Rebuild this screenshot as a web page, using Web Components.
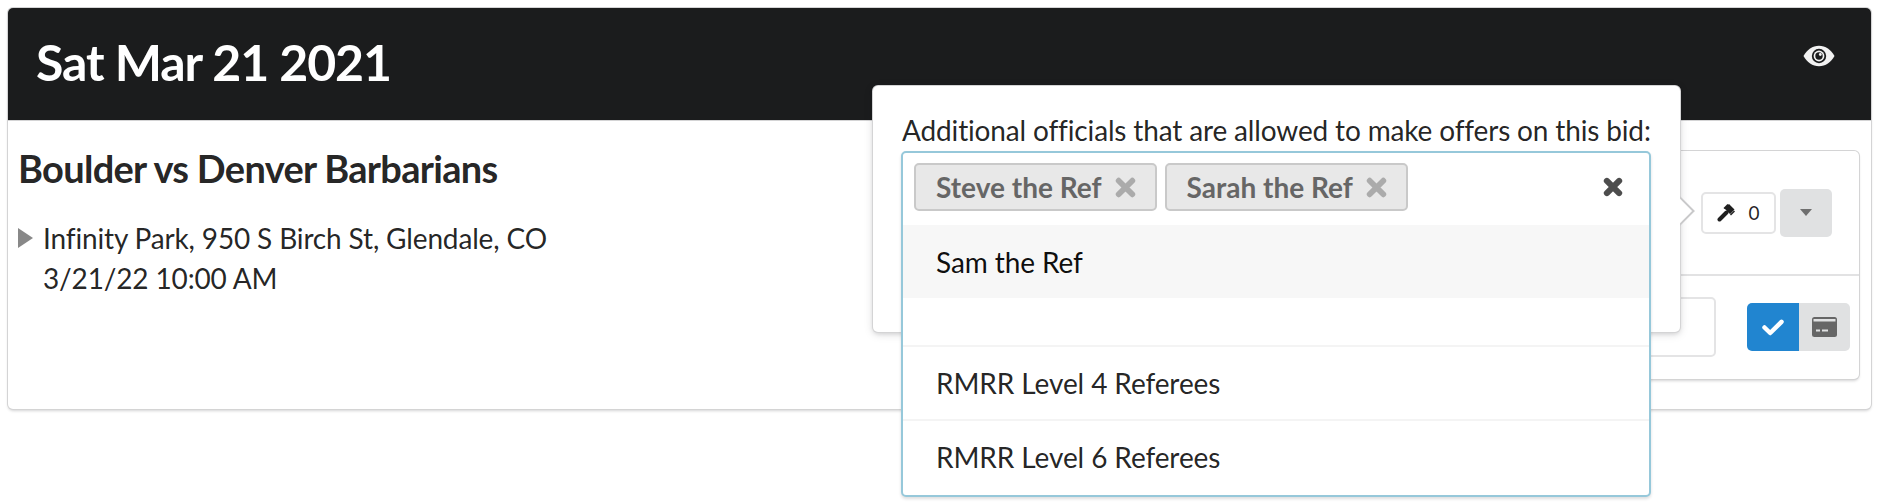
<!DOCTYPE html>
<html>
<head>
<meta charset="utf-8">
<style>
  html, body { margin: 0; background: #fff; min-height: 100vh; }
  body { font-family: Lato, "Liberation Sans", sans-serif; color: rgba(0,0,0,.87); display: flow-root; }
</style>
</head>
<body>
<game-card date="Sat Mar 21 2021">
  <game-info slot="info" title-text="Boulder vs Denver Barbarians">
    <span>Infinity Park, 950 S Birch St, Glendale, CO</span>
    <span>3/21/22 10:00 AM</span>
  </game-info>
  <bid-panel slot="panel"></bid-panel>
  <officials-popup slot="popup">
    <tag-chip slot="tags">Steve the Ref</tag-chip>
    <tag-chip slot="tags">Sarah the Ref</tag-chip>
    <menu-row slot="rows" selected>Sam the Ref</menu-row>
    <menu-row slot="rows" empty></menu-row>
    <menu-row slot="rows">RMRR Level 4 Referees</menu-row>
    <menu-row slot="rows">RMRR Level 6 Referees</menu-row>
  </officials-popup>
</game-card>

<script>
class GameCard extends HTMLElement {
  constructor() {
    super();
    this.attachShadow({ mode: "open" });
  }

  connectedCallback() {
    this.shadowRoot.innerHTML = `
      <style>
        :host {
          display: block;
          position: relative;
          margin: 8px 9px 0 8px;
          height: 401px;
          background: #fff;
          border-radius: 5px;
          box-shadow: 0 2px 3px 0 #d4d4d5, 0 0 0 1px #d4d4d5;
        }
        header {
          display: flex;
          align-items: center;
          justify-content: space-between;
          height: 112px;
          padding: 0 36px 0 28px;
          box-sizing: border-box;
          background: #1b1c1d;
          color: #fff;
          border-radius: 5px 5px 0 0;
          box-shadow: 0 1px 0 #d4d4d5;
        }
        h1 { margin: 0 0 5px; font-size: 50px; font-weight: 700; line-height: 1.2; letter-spacing: -1.05px; }
        svg { display: block; margin-bottom: 16px; }
        main {
          display: flex;
          justify-content: space-between;
          align-items: flex-start;
          padding: 31px 12px 0 10px;
        }
      </style>
      <header>
        <h1>${this.getAttribute("date")}</h1>
        <svg width="32" height="22" viewBox="0 0 32 22">
          <path fill="#f2f2f2" d="M0.5 11C4 4.6 9.5 0.8 16 0.8S28 4.6 31.5 11C28 17.4 22.500 21.200 16 21.200S4 17.400 0.500 11Z"/>
          <circle cx="16" cy="11" r="7.200" fill="#1b1c1d"/>
          <circle cx="16" cy="11" r="5.400" fill="#f2f2f2"/>
          <circle cx="16" cy="11" r="3.700" fill="#1b1c1d"/>
          <circle cx="17.300" cy="9.500" r="1.400" fill="#f2f2f2"/>
        </svg>
      </header>
      <main>
        <slot name="info"></slot>
        <slot name="panel"></slot>
      </main>
      <slot name="popup"></slot>
    `;
  }
}

class GameInfo extends HTMLElement {
  constructor() {
    super();
    this.attachShadow({ mode: "open" });
  }

  connectedCallback() {
    this.shadowRoot.innerHTML = `
      <style>
        :host { display: block; margin-top: -3px; }
        h2 { margin: 0 0 30px; font-size: 38px; font-weight: 700; line-height: 40px; letter-spacing: -.7px; color: rgba(0,0,0,.87); }
        .row { display: flex; align-items: flex-start; gap: 10px; }
        .arrow {
          width: 0; height: 0; margin-top: 10px;
          border-style: solid;
          border-width: 10px 0 10px 15px;
          border-color: transparent transparent transparent #888;
        }
        .lines { font-size: 28px; line-height: 40px; letter-spacing: -.15px; }
        ::slotted(span) { display: block; }
      </style>
      <h2>${this.getAttribute("title-text")}</h2>
      <div class="row">
        <span class="arrow"></span>
        <div class="lines"><slot></slot></div>
      </div>
    `;
  }
}

class BidPanel extends HTMLElement {
  constructor() {
    super();
    this.attachShadow({ mode: "open" });
  }

  connectedCallback() {
    this.shadowRoot.innerHTML = `
      <style>
        :host {
          display: block;
          width: 800px;
          height: 228px;
          box-sizing: border-box;
          background: #fff;
          border-radius: 5px;
          box-shadow: 0 2px 3px 0 #d4d4d5, 0 0 0 1px #d4d4d5;
        }
        .top {
          display: flex;
          justify-content: flex-end;
          align-items: center;
          gap: 4px;
          height: 125px;
          padding: 0 27px 0 0;
          box-sizing: border-box;
          border-bottom: 2px solid #e2e2e3;
        }
        .bid {
          display: flex;
          align-items: center;
          justify-content: center;
          gap: 12px;
          width: 75px;
          height: 42px;
          box-sizing: border-box;
          border: 2px solid #e4e4e5;
          border-radius: 5px;
          font-size: 19px;
          font-weight: 400;
        }
        .more {
          display: flex;
          align-items: center;
          justify-content: center;
          width: 52px;
          height: 48px;
          background: #e0e1e2;
          border-radius: 5px;
        }
        .more i {
          width: 0; height: 0;
          border-style: solid;
          border-width: 7px 6.500px 0 6.500px;
          border-color: #6f6f6f transparent transparent transparent;
        }
        .bottom {
          display: flex;
          justify-content: flex-end;
          align-items: center;
          gap: 31px;
          padding: 21px 9px 0 0;
        }
        .field {
          width: 260px;
          height: 60px;
          box-sizing: border-box;
          border: 2px solid #e4e4e5;
          border-radius: 5px;
        }
        .toggle { display: flex; height: 48px; border-radius: 5px; overflow: hidden; }
        .toggle div { display: flex; align-items: center; justify-content: center; width: 52px; }
        .ok { background: #2185d0; }
        .card { background: #e0e1e2; width: 51px !important; }
      </style>
      <div class="top">
        <div class="bid">
          <svg width="19" height="19" viewBox="0 0 19 19">
            <path fill="#1f1f1f" d="M7.500 5.500L12 1L17.500 6.500L13 11ZM6.500 5L10.500 1L11.500 2L7.500 6ZM13 11.500L17 7.500L18 8.500L14 12.500Z"/>
            <path fill="none" stroke="#1f1f1f" stroke-width="4" stroke-linecap="round" d="M9.500 9.500L2.500 16.500"/>
          </svg>
          <span>0</span>
        </div>
        <div class="more"><i></i></div>
      </div>
      <div class="bottom">
        <div class="field"></div>
        <div class="toggle">
          <div class="ok">
            <svg width="22" height="17" viewBox="0 0 22 17">
              <path fill="none" stroke="#fff" stroke-width="4.500" stroke-linecap="round" stroke-linejoin="round" d="M2.500 8.500L8.200 14L19.500 2.800"/>
            </svg>
          </div>
          <div class="card">
            <svg width="25" height="20" viewBox="0 0 25 20">
              <rect width="25" height="20" rx="2.500" fill="#666"/>
              <rect x="1.500" y="2" width="22" height="2.500" fill="#e0e1e2"/>
              <rect x="4" y="12.500" width="4" height="2" fill="#e0e1e2"/>
              <rect x="10" y="12.500" width="6" height="2" fill="#e0e1e2"/>
            </svg>
          </div>
        </div>
      </div>
    `;
  }
}

class OfficialsPopup extends HTMLElement {
  constructor() {
    super();
    this.attachShadow({ mode: "open" });
  }

  connectedCallback() {
    this.shadowRoot.innerHTML = `
      <style>
        :host {
          position: absolute;
          left: 865px;
          top: 78px;
          width: 807px;
          height: 246px;
          box-sizing: border-box;
          padding: 24px 29px 0;
          background: #fff;
          border-radius: 5px;
          box-shadow: 0 0 0 1px #d4d4d5, 0 2px 4px 0 rgba(34,36,38,.12), 0 2px 10px 0 rgba(34,36,38,.15);
        }
        .arrow {
          position: absolute;
          right: -8px;
          top: 115px;
          width: 20px;
          height: 20px;
          background: #fff;
          transform: rotate(45deg);
          box-shadow: 1px -1px 0 1px #c9c9ca;
        }
        .cover {
          position: absolute;
          right: 0;
          top: 100px;
          width: 16px;
          height: 50px;
          background: #fff;
        }
        p { position: relative; margin: 0; font-size: 28px; line-height: 40px; letter-spacing: -.15px; white-space: nowrap; }
        .box {
          position: absolute;
          left: 28px;
          top: 65px;
          width: 750px;
          height: 346px;
          box-sizing: border-box;
          background: #fff;
          border: 2px solid #96c8da;
          border-radius: 5px;
          box-shadow: 0 2px 3px 0 rgba(34,36,38,.15);
        }
        .tags {
          position: relative;
          display: flex;
          gap: 8px;
          height: 72px;
          padding: 10px 0 0 11px;
          box-sizing: border-box;
        }
        .clear { position: absolute; right: 26px; top: 24px; display: block; }
      </style>
      <div class="arrow"></div>
      <div class="cover"></div>
      <p>Additional officials that are allowed to make offers on this bid:</p>
      <div class="box">
        <div class="tags">
          <slot name="tags"></slot>
          <svg class="clear" width="20" height="20" viewBox="0 0 18 18">
            <path fill="none" stroke="#4d4d4d" stroke-width="5.500" stroke-linecap="round" d="M3.500 3.500L14.500 14.500M14.500 3.500L3.500 14.500"/>
          </svg>
        </div>
        <slot name="rows"></slot>
      </div>
    `;
  }
}

class TagChip extends HTMLElement {
  constructor() {
    super();
    this.attachShadow({ mode: "open" });
  }

  connectedCallback() {
    this.shadowRoot.innerHTML = `
      <style>
        :host {
          display: inline-flex;
          align-items: center;
          gap: 13px;
          height: 48px;
          box-sizing: border-box;
          padding: 0 19px 0 20px;
          background: #e8e8e8;
          border: 2px solid #c9c9c9;
          border-radius: 5px;
          color: #666;
          font-size: 28px;
          font-weight: 700;
        }
        svg { display: block; }
      </style>
      <slot></slot>
      <svg width="21" height="21" viewBox="0 0 20 20">
        <path fill="none" stroke="#ababab" stroke-width="5.500" stroke-linecap="round" d="M3.500 3.500L16.500 16.500M16.500 3.500L3.500 16.500"/>
      </svg>
    `;
  }
}

class MenuRow extends HTMLElement {
  constructor() {
    super();
    this.attachShadow({ mode: "open" });
  }

  connectedCallback() {
    this.shadowRoot.innerHTML = `
      <style>
        :host {
          display: flex;
          align-items: center;
          height: 74px;
          box-sizing: border-box;
          padding-left: 33px;
          border-top: 2px solid #f4f4f4;
          font-size: 28px;
          letter-spacing: -.1px;
        }
        :host([selected]) { background: #f7f7f7; border-top: 0; height: 73px; color: rgba(0,0,0,.95); }
        :host([empty]) { height: 47px; border-top: 0; }
      </style>
      <slot></slot>
    `;
  }
}

customElements.define("game-card", GameCard);
customElements.define("game-info", GameInfo);
customElements.define("bid-panel", BidPanel);
customElements.define("officials-popup", OfficialsPopup);
customElements.define("tag-chip", TagChip);
customElements.define("menu-row", MenuRow);
</script>
</body>
</html>
